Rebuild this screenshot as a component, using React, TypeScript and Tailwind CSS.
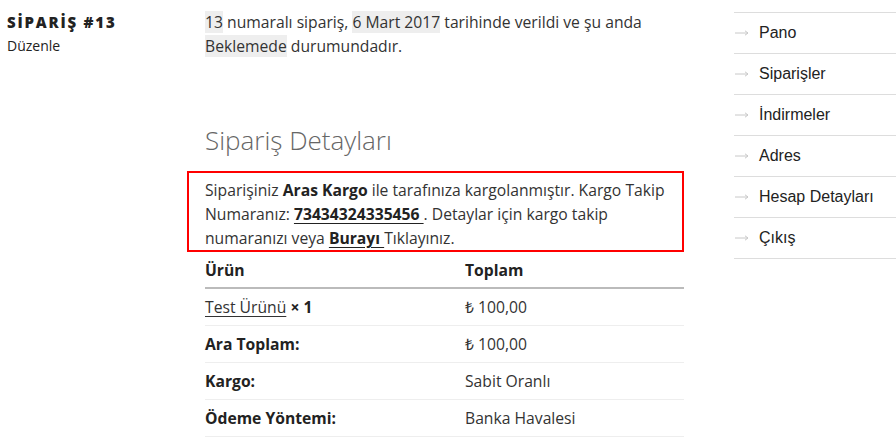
const sideLinks = ['Pano', 'Siparişler', 'İndirmeler', 'Adres', 'Hesap Detayları', 'Çıkış'];

function Mark({ children }: { children: React.ReactNode }) {
  return <mark className="bg-[#eeeeee] text-[#333]">{children}</mark>;
}

function Arrow() {
  return (
    <svg width="14" height="6" viewBox="0 0 14 6" className="text-[#c8c8c8]">
      <path d="M0 3h13M10 0.8L13 3L10 5.2" fill="none" stroke="currentColor" strokeWidth="1" />
    </svg>
  );
}

export default function App() {
  return (
    <div className="w-[896px] h-[443px] overflow-hidden bg-white flex font-['Open_Sans',sans-serif] text-[#333]">
      {/* left */}
      <div className="w-[205px] shrink-0 pl-[7px] pt-[12px]">
        <h2 className="text-[15px] leading-[20px] font-extrabold tracking-[0.12em] text-[#222]">SİPARİŞ #13</h2>
        <a className="block mt-[4px] text-[14px] leading-[20px] text-[#222]">Düzenle</a>
      </div>

      {/* main */}
      <div className="w-[479px] shrink-0 pt-[10px] text-[15.7px]">
        <p className="leading-[24px]">
          <Mark>13</Mark> numaralı sipariş, <Mark>6 Mart 2017</Mark> tarihinde verildi ve şu anda{' '}
          <Mark>Beklemede</Mark> durumundadır.
        </p>

        <h2 className="mt-[64px] text-[26px] leading-[36px] font-light text-[#666]">Sipariş Detayları</h2>

        <div className="mt-[13px] -ml-[18px] border-2 border-[#ff0000] pl-[16px] pr-[4px] pt-[5px] leading-[24px]">
          Siparişiniz <b className="text-[#222]">Aras Kargo</b> ile tarafınıza kargolanmıştır. Kargo Takip Numaranız:{' '}
          <a className="font-bold text-[#222] underline underline-offset-[3px]">73434324335456 </a>. Detaylar için kargo takip
          numaranızı veya <a className="font-bold text-[#222] underline underline-offset-[3px]">Burayı </a> Tıklayınız.
        </div>

        <div className="leading-[24px]">
          <div className="flex h-[37px] items-center border-b-2 border-[#bbbbbb] font-bold text-[#222]">
            <div className="w-[260px]">Ürün</div>
            <div>Toplam</div>
          </div>
          <div className="flex h-[37px] items-center border-b border-[#eeeeee]">
            <div className="w-[260px]">
              <a className="underline underline-offset-[3px]">Test Ürünü</a> <b className="text-[#222]">× 1</b>
            </div>
            <div>₺ 100,00</div>
          </div>
          <div className="flex h-[37px] items-center border-b border-[#eeeeee]">
            <div className="w-[260px] font-bold text-[#222]">Ara Toplam:</div>
            <div>₺ 100,00</div>
          </div>
          <div className="flex h-[37px] items-center border-b border-[#eeeeee]">
            <div className="w-[260px] font-bold text-[#222]">Kargo:</div>
            <div>Sabit Oranlı</div>
          </div>
          <div className="flex h-[37px] items-center border-b border-[#eeeeee]">
            <div className="w-[260px] font-bold text-[#222]">Ödeme Yöntemi:</div>
            <div>Banka Havalesi</div>
          </div>
        </div>
      </div>

      {/* sidebar */}
      <div className="ml-[50px] flex-1 pt-[12px]">
        <ul className="border-t border-[#dddddd] font-['Liberation_Sans',sans-serif] text-[16px] text-[#222]">
          {sideLinks.map((l) => (
            <li key={l} className="flex h-[41px] items-center border-b border-[#dddddd]">
              <span className="w-[25px] pl-[1px] flex items-center">
                <Arrow />
              </span>
              <span>{l}</span>
            </li>
          ))}
        </ul>
      </div>
    </div>
  );
}
